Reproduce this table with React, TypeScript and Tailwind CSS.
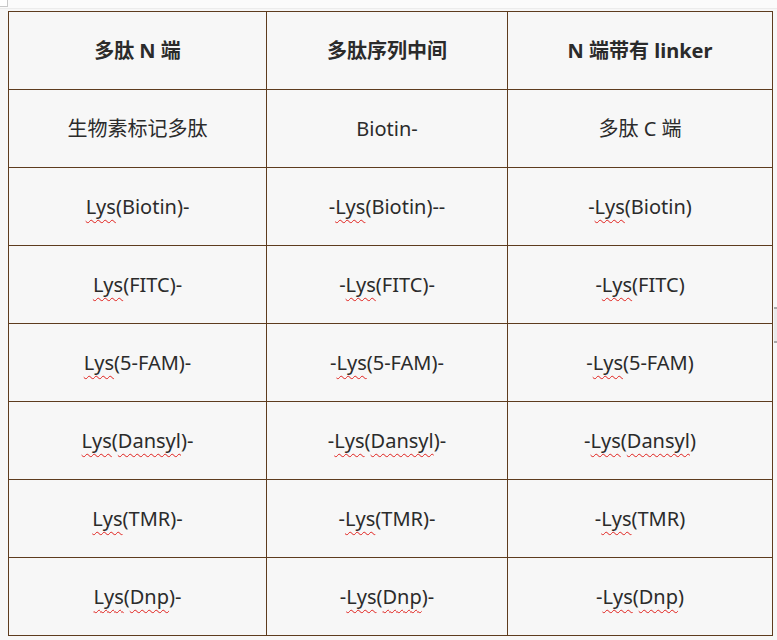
const headers = ["多肽 N 端", "多肽序列中间", "N 端带有 linker"];

type Cell = { pre?: string; inner: string; wavyInner?: boolean; post?: string };

const mods: { inner: string; wavy: boolean }[] = [
  { inner: "Biotin", wavy: false },
  { inner: "FITC", wavy: false },
  { inner: "5-FAM", wavy: false },
  { inner: "Dansyl", wavy: true },
  { inner: "TMR", wavy: false },
  { inner: "Dnp", wavy: true },
];

function Wavy({ children }: { children: React.ReactNode }) {
  return (
    <span className="underline decoration-wavy decoration-[#e0201c] decoration-1 underline-offset-[5px]">{children}</span>
  );
}

function LysCell({ cell }: { cell: Cell }) {
  return (
    <span>
      {cell.pre}
      <Wavy>Lys</Wavy>(
      {cell.wavyInner ? <Wavy>{cell.inner}</Wavy> : cell.inner})
      {cell.post}
    </span>
  );
}

export default function App() {
  const rows: Cell[][] = mods.map((m, i) => [
    { inner: m.inner, wavyInner: m.wavy, post: "-" },
    { pre: "-", inner: m.inner, wavyInner: m.wavy, post: i === 0 ? "--" : "-" },
    { pre: "-", inner: m.inner, wavyInner: m.wavy },
  ]);

  return (
    <div
      className="relative min-h-[640px] w-[777px] bg-[#f7f7f7] text-[#2b2b2b]"
      style={{ fontFamily: '"Noto Sans", "Noto Sans CJK SC", sans-serif' }}
    >
      <div className="h-[9px] border-b border-[#ececec] bg-[#fbfbfb]">
        <div className="h-[7px] w-[8px] border-r border-b border-[#c8c8c8] bg-white" />
      </div>
      <table className="ml-[8px] mt-[2px] w-[764px] table-fixed border-collapse text-[20px]">
        <colgroup>
          <col className="w-[258px]" />
          <col className="w-[241px]" />
          <col className="w-[265px]" />
        </colgroup>
        <thead>
          <tr className="h-[78px]">
            {headers.map((h) => (
              <th key={h} className="border border-[#5e3c1e] text-center align-middle font-bold">
                {h}
              </th>
            ))}
          </tr>
        </thead>
        <tbody>
          <tr className="h-[78px]">
            <td className="border border-[#5e3c1e] text-center align-middle">生物素标记多肽</td>
            <td className="border border-[#5e3c1e] text-center align-middle">Biotin-</td>
            <td className="border border-[#5e3c1e] text-center align-middle">多肽 C 端</td>
          </tr>
          {rows.map((row, i) => (
            <tr key={i} className="h-[78px]">
              {row.map((c, j) => (
                <td key={j} className="border border-[#5e3c1e] text-center align-middle">
                  <LysCell cell={c} />
                </td>
              ))}
            </tr>
          ))}
        </tbody>
      </table>
      <div className="absolute right-0 top-[307px] h-[36px] w-[3px] border-y-2 border-[#a8a8a8] bg-[#eaeaea]" />
    </div>
  );
}
